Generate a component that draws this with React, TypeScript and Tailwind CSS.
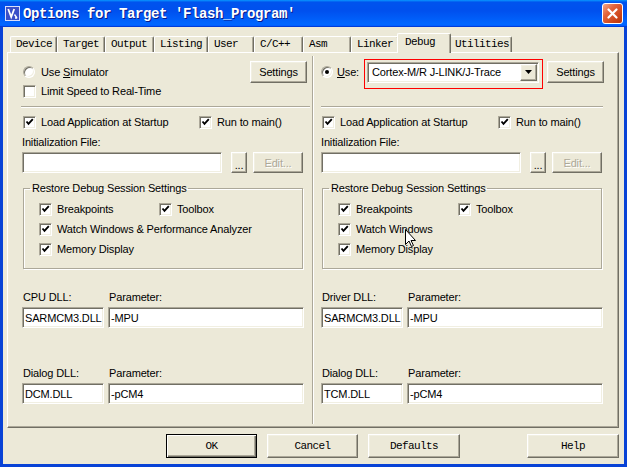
import React from "react";

// Classic 3D edges using the Luna system colours
const raisedCls =
  "bg-[#ece9d8] border border-t-white border-l-white border-r-[#716f64] border-b-[#716f64] shadow-[inset_-1px_-1px_#aca899,inset_1px_1px_#f1efe2]";
const sunkenCls =
  "border border-t-[#aca899] border-l-[#aca899] border-r-white border-b-white shadow-[inset_1px_1px_#716f64,inset_-1px_-1px_#f1efe2]";

function Button({
  children,
  className = "",
  disabled = false,
}: {
  children: React.ReactNode;
  className?: string;
  disabled?: boolean;
}) {
  return (
    <div
      className={`flex shrink-0 items-center justify-center whitespace-nowrap ${raisedCls} ${
        disabled ? "text-[#aca899] [text-shadow:1px_1px_#ffffff]" : ""
      } ${className}`}
    >
      {children}
    </div>
  );
}

function Checkbox({ checked = true }: { checked?: boolean }) {
  return (
    <span className={`relative block h-[13px] w-[13px] shrink-0 bg-white ${sunkenCls}`}>
      {checked && (
        <svg className="absolute left-0 top-0" width="11" height="11" viewBox="0 0 11 11">
          <path d="M2.5 4.5 L4.5 6.8 L8.8 2.2" stroke="#000" strokeWidth="1.9" fill="none" />
        </svg>
      )}
    </span>
  );
}

function CheckItem({
  label,
  className = "",
  checked = true,
}: {
  label: string;
  className?: string;
  checked?: boolean;
}) {
  return (
    <div className={`flex h-[14px] items-center whitespace-nowrap ${className}`}>
      <Checkbox checked={checked} />
      <span className="ml-[5px]">{label}</span>
    </div>
  );
}

function Radio({ checked = false }: { checked?: boolean }) {
  return (
    <span
      className={`flex h-[12px] w-[12px] shrink-0 items-center justify-center rounded-full bg-white border border-t-[#aca899] border-l-[#aca899] border-r-white border-b-white shadow-[inset_1px_1px_#716f64,inset_-1px_-1px_#f1efe2]`}
    >
      {checked && <span className="block h-[4px] w-[4px] rounded-full bg-black" />}
    </span>
  );
}

function Field({ value = "", className = "" }: { value?: string; className?: string }) {
  return (
    <div
      className={`flex h-[21px] shrink-0 items-center overflow-hidden whitespace-nowrap bg-white pl-[2px] ${sunkenCls} ${className}`}
    >
      {value}
    </div>
  );
}

function Combo() {
  return (
    <span className="relative block shrink-0">
      <span className={`flex h-[21px] w-[172px] items-center bg-white p-[1px] ${sunkenCls}`}>
        <span className="flex-1 whitespace-nowrap pl-[3px]">Cortex-M/R J-LINK/J-Trace</span>
        <span className={`flex h-[17px] w-[17px] items-center justify-center ${raisedCls}`}>
          <svg width="7" height="4" viewBox="0 0 7 4">
            <path d="M0 0 H7 L3.5 4 Z" fill="#000" />
          </svg>
        </span>
      </span>
      <span className="absolute -left-[3px] -top-[3px] -right-[4px] -bottom-[6px] border border-[#ff0000]" />
    </span>
  );
}

type PaneProps = {
  head: React.ReactNode;
  sepClass: string;
  watch: string;
  dll1Label: string;
  dll1: string;
  dll2: string;
  className: string;
};

function Pane({ head, sepClass, watch, dll1Label, dll1, dll2, className }: PaneProps) {
  return (
    <div className={`flex flex-col ${className}`}>
      {head}
      <div className={`mt-[8px] h-[2px] border-t border-t-[#aca899] border-b border-b-white ${sepClass}`} />

      <div className="mt-[7px] flex h-[14px] items-center">
        <div className="w-[177px] shrink-0 pl-[1px]">
          <CheckItem label="Load Application at Startup" />
        </div>
        <CheckItem label="Run to main()" />
      </div>

      <div className="mt-[6px] h-[14px] whitespace-nowrap">Initialization File:</div>
      <div className="mt-[3px] flex h-[21px]">
        <Field className="w-[200px]" />
        <Button className="ml-[9px] w-[16px] items-end pb-[2px] leading-[10px]">...</Button>
        <Button className="ml-[6px] w-[50px]" disabled>
          Edit...
        </Button>
      </div>

      <fieldset className="mt-[8px] ml-[1px] h-[88px] w-[280px] border border-[#aca899] shadow-[inset_1px_1px_#ffffff,1px_1px_#ffffff]">
        <legend className="ml-[6px] px-[2px] leading-[14px] whitespace-nowrap">
          Restore Debug Session Settings
        </legend>
        <div className="ml-[15px] mt-[7px] flex flex-col gap-[6px]">
          <div className="flex h-[14px] items-center">
            <div className="w-[120px] shrink-0">
              <CheckItem label="Breakpoints" />
            </div>
            <CheckItem label="Toolbox" />
          </div>
          <CheckItem label={watch} />
          <CheckItem label="Memory Display" />
        </div>
      </fieldset>

      <div className="mt-[21px] flex h-[14px] whitespace-nowrap">
        <span className="ml-[1px] w-[86px] shrink-0">{dll1Label}</span>
        <span>Parameter:</span>
      </div>
      <div className="mt-[3px] flex">
        <Field className="w-[82px]" value={dll1} />
        <Field className="ml-[4px] w-[196px]" value="-MPU" />
      </div>

      <div className="mt-[38px] flex h-[14px] whitespace-nowrap">
        <span className="ml-[1px] w-[86px] shrink-0">Dialog DLL:</span>
        <span>Parameter:</span>
      </div>
      <div className="mt-[3px] flex">
        <Field className="w-[82px]" value={dll2} />
        <Field className="ml-[4px] w-[196px]" value="-pCM4" />
      </div>
    </div>
  );
}

function TitleBar() {
  return (
    <div className="flex h-[27px] w-[627px] items-center bg-[linear-gradient(180deg,#0997ff_0%,#0053ee_8%,#0050ee_40%,#0066ff_88%,#0066ff_93%,#005bff_95%,#003dd7_96%,#003dd7_100%)]">
      <svg className="ml-[5px] shrink-0" width="15" height="15" viewBox="0 0 15 15">
        <rect x="0.5" y="0.5" width="14" height="14" fill="#3a4fc8" stroke="#d8defa" />
        <path d="M3.2 3 L6.2 11 L9.2 3" stroke="#fff" strokeWidth="1.8" fill="none" />
        <path d="M9.5 8.5 L12 12 M10 12 H12.2" stroke="#fff" strokeWidth="1.3" fill="none" />
      </svg>
      <span className="ml-[3px] whitespace-nowrap font-['Liberation_Mono',monospace] text-[14px] font-bold leading-[18px] tracking-[-0.4px] text-white [text-shadow:1px_1px_#0a1a8a]">
        Options for Target 'Flash_Program'
      </span>
      <div className="ml-auto mr-[4px] flex h-[21px] w-[21px] items-center justify-center rounded-[3px] border border-white bg-[linear-gradient(135deg,#f2a78a_0%,#e2643c_35%,#cc4418_75%,#b8360f_100%)]">
        <svg width="11" height="11" viewBox="0 0 11 11">
          <path d="M1.5 1.5 L9.5 9.5 M9.5 1.5 L1.5 9.5" stroke="#fff" strokeWidth="2.2" strokeLinecap="round" />
        </svg>
      </div>
    </div>
  );
}

const tabs = [
  { label: "Device", cls: "w-[47px]" },
  { label: "Target", cls: "w-[48px]" },
  { label: "Output", cls: "w-[49px]" },
  { label: "Listing", cls: "w-[54px]" },
  { label: "User", cls: "w-[46px]" },
  { label: "C/C++", cls: "w-[49px]" },
  { label: "Asm", cls: "w-[48px]" },
  { label: "Linker", cls: "w-[48px]" },
  { label: "Debug", cls: "w-[54px]", active: true },
  { label: "Utilities", cls: "w-[63px]" },
];

function TabStrip() {
  return (
    <div className="ml-[7px] mt-[6px] flex h-[19px] items-end font-['Liberation_Mono',monospace] text-[11px] leading-[14px] tracking-[-0.6px]">
      {tabs.map((t) =>
        t.active ? (
          <div
            key={t.label}
            className={`relative z-10 -mx-[2px] -mb-[1px] h-[20px] shrink-0 rounded-t-[2px] bg-[#ece9d8] pl-[7px] pt-[1px] border-l border-t border-l-white border-t-white border-r border-r-[#716f64] shadow-[inset_-1px_0_#aca899] ${t.cls}`}
          >
            {t.label}
          </div>
        ) : (
          <div
            key={t.label}
            className={`h-[16px] shrink-0 rounded-t-[2px] pl-[5px] border-l border-t border-l-white border-t-white border-r border-r-[#716f64] shadow-[inset_-1px_0_#aca899] ${t.cls}`}
          >
            {t.label}
          </div>
        )
      )}
    </div>
  );
}

export default function App() {
  const leftHead = (
    <>
      <div className="mt-[8px] flex h-[22px] items-center">
        <div className="flex w-[228px] shrink-0 items-center pl-[1px]">
          <Radio />
          <span className="ml-[6px] whitespace-nowrap">
            Use <u>S</u>imulator
          </span>
        </div>
        <Button className="h-[22px] w-[57px]">Settings</Button>
      </div>
      <div className="mt-[1px] flex h-[14px] items-center pl-[1px]">
        <CheckItem label="Limit Speed to Real-Time" checked={false} />
      </div>
    </>
  );

  const rightHead = (
    <>
      <div className="mt-[8px] flex h-[22px] items-center">
        <Radio checked />
        <span className="ml-[4px] w-[30px] shrink-0 whitespace-nowrap">
          <u>U</u>se:
        </span>
        <Combo />
        <Button className="ml-[8px] h-[22px] w-[57px]">Settings</Button>
      </div>
      <div className="mt-[1px] h-[14px]" />
    </>
  );

  return (
    <div className="relative h-[467px] w-[627px] overflow-hidden bg-[#ece9d8] font-['Liberation_Sans',Arial,sans-serif] text-[11px] leading-[14px] tracking-[-0.15px] text-black">
      <TitleBar />
      <div className="flex h-[440px] flex-col border-x-[3px] border-b-[3px] border-[#0842d6]">
        <TabStrip />
        <div className="relative ml-[4px] flex h-[376px] w-[612px] shrink-0 border border-t-white border-l-white border-r-[#716f64] border-b-[#716f64] shadow-[inset_-1px_-1px_#aca899]">
          <Pane
            className="w-[304px] shrink-0 pl-[14px]"
            head={leftHead}
            sepClass="-ml-[1px] w-[289px]"
            watch="Watch Windows & Performance Analyzer"
            dll1Label="CPU DLL:"
            dll1="SARMCM3.DLL"
            dll2="DCM.DLL"
          />
          <div className="my-[3px] w-[2px] shrink-0 border-l border-l-[#aca899] border-r border-r-white" />
          <Pane
            className="flex-1 pl-[7px]"
            head={rightHead}
            sepClass="w-[282px]"
            watch="Watch Windows"
            dll1Label="Driver DLL:"
            dll1="SARMCM3.DLL"
            dll2="TCM.DLL"
          />
        </div>
        <div className="ml-[163px] mt-[6px] flex h-[24px] font-['Liberation_Mono',monospace] text-[11px] tracking-[-0.6px]">
          <div className="flex h-[24px] w-[91px] items-center justify-center border border-black bg-[#ece9d8] shadow-[inset_1px_1px_#ffffff,inset_-1px_-1px_#716f64,inset_-2px_-2px_#aca899]">
            OK
          </div>
          <Button className="ml-[10px] h-[24px] w-[91px]">Cancel</Button>
          <Button className="ml-[10px] h-[24px] w-[92px]">Defaults</Button>
          <Button className="ml-[67px] h-[24px] w-[92px]">Help</Button>
        </div>
      </div>
      {/* mouse pointer resting over the Restore Debug group */}
      <svg className="absolute left-[405px] top-[229px]" width="12" height="19" viewBox="0 0 12 19">
        <path
          d="M0.5 0.5 V15.5 L4 12 L6.5 17.5 L8.5 16.5 L6 11.5 H10.5 Z"
          fill="#fff"
          stroke="#000"
          strokeWidth="1"
        />
      </svg>
    </div>
  );
}
